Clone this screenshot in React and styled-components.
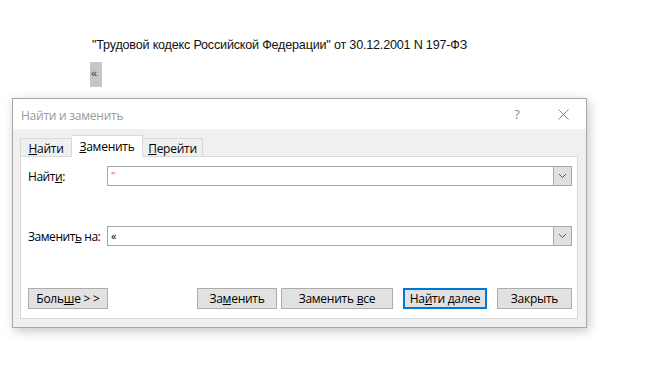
import React from "react";
import styled, { createGlobalStyle } from "styled-components";

const GlobalStyle = createGlobalStyle`
  html, body {
    margin: 0;
    padding: 0;
    background: #ffffff;
  }
  body {
    font-family: "Open Sans", "Noto Sans", sans-serif;
    font-size: 12px;
    letter-spacing: -0.25px;
    color: #000000;
  }
`;

const Page = styled.div`
  width: 647px;
  height: 381px;
  padding-top: 36px;
  box-sizing: border-box;
  overflow: hidden;
`;

const DocLine = styled.div`
  margin-left: 92px;
  height: 18px;
  line-height: 18px;
  font-family: "Liberation Sans", Arial, sans-serif;
  font-size: 12.6px;
  letter-spacing: -0.2px;
  color: #111;
`;

const Marker = styled.div`
  margin: 8px 0 0 90px;
  width: 12px;
  height: 25px;
  background: #c6c6c6;
  font-family: "Liberation Sans", Arial, sans-serif;
  font-size: 11px;
  line-height: 22px;
  padding-left: 1px;
  box-sizing: border-box;
  color: #333;
`;

const Dialog = styled.div`
  margin: 11px 0 0 12px;
  width: 575px;
  height: 230px;
  box-sizing: border-box;
  border: 1px solid #a8a8a8;
  background: #f0f0f0;
  box-shadow: 2px 3px 10px rgba(0, 0, 0, 0.22);
  display: flex;
  flex-direction: column;
`;

const TitleBar = styled.div`
  height: 30px;
  background: #ffffff;
  display: flex;
  align-items: center;
  padding-left: 8px;
  flex-shrink: 0;
`;

const Title = styled.div`
  flex: 1;
  color: #9a9a9a;
  font-size: 12px;
  margin-top: 2px;
`;

const TitleButton = styled.div`
  width: ${(p) => p.$w}px;
  display: flex;
  justify-content: center;
  align-items: center;
  color: #8a8a8a;
  font-size: 13px;
`;

const Body = styled.div`
  flex: 1;
  padding: 7px 8px 8px 7px;
  display: flex;
  flex-direction: column;
`;

const Tabs = styled.div`
  display: flex;
  align-items: flex-end;
  height: 21px;
  position: relative;
  z-index: 1;
  margin-bottom: -1px;
`;

const Tab = styled.div`
  width: ${(p) => p.$w}px;
  height: ${(p) => (p.$active ? 22 : 19)}px;
  box-sizing: border-box;
  border: 1px solid #d9d9d9;
  border-bottom: ${(p) => (p.$active ? "1px solid #ffffff" : "1px solid #d9d9d9")};
  border-left: ${(p) => (p.$noLeft ? "none" : "1px solid #d9d9d9")};
  background: ${(p) => (p.$active ? "#ffffff" : "#f0f0f0")};
  display: flex;
  align-items: center;
  justify-content: center;
  padding-top: ${(p) => (p.$active ? 0 : 2)}px;
  font-size: 12px;
  color: #000;
`;

const Panel = styled.div`
  flex: 1;
  background: #ffffff;
  border: 1px solid #d9d9d9;
  padding: 9px 5px 9px 7px;
  display: flex;
  flex-direction: column;
`;

const FieldRow = styled.div`
  display: flex;
  align-items: center;
  height: 20px;
  margin-bottom: ${(p) => p.$gap || 0}px;
`;

const Label = styled.div`
  width: 79px;
  font-size: 12px;
  letter-spacing: -0.45px;
  white-space: nowrap;
  color: #000;
`;

const Combo = styled.div`
  flex: 1;
  height: 20px;
  box-sizing: border-box;
  border: 1px solid #a8a8a8;
  display: flex;
  background: #fff;
`;

const ComboText = styled.div`
  flex: 1;
  padding-left: 3px;
  font-size: ${(p) => p.$size || 12}px;
  line-height: 18px;
  color: ${(p) => p.$color || "#000"};
`;

const ComboButton = styled.div`
  width: 17px;
  background: #e0e0e0;
  border-left: 1px solid #a8a8a8;
  display: flex;
  align-items: center;
  justify-content: center;
`;

const ButtonRow = styled.div`
  margin-top: auto;
  display: flex;
  align-items: center;
`;

const Button = styled.div`
  width: ${(p) => p.$w}px;
  height: 21px;
  box-sizing: border-box;
  margin-left: ${(p) => p.$ml || 0}px;
  border: ${(p) => (p.$default ? "2px solid #0078d7" : "1px solid #adadad")};
  background: #e1e1e1;
  display: flex;
  align-items: center;
  justify-content: center;
  font-size: 12px;
  color: #000;
  white-space: pre;
`;

const Spacer = styled.div`
  flex: 1;
`;

const U = styled.span`
  text-decoration: underline;
  text-underline-offset: 1px;
`;

const Chevron = () => (
  <svg width="9" height="6" viewBox="0 0 9 6">
    <path d="M1 1 L4.5 4.5 L8 1" fill="none" stroke="#555" strokeWidth="1" />
  </svg>
);

const Close = () => (
  <svg width="11" height="11" viewBox="0 0 11 11">
    <path d="M0.5 0.5 L10.5 10.5 M10.5 0.5 L0.5 10.5" stroke="#8a8a8a" strokeWidth="1" />
  </svg>
);

export default function App() {
  return (
    <Page>
      <GlobalStyle />
      <DocLine>"Трудовой кодекс Российской Федерации" от 30.12.2001 N 197-ФЗ</DocLine>
      <Marker>«</Marker>
      <Dialog>
        <TitleBar>
          <Title>Найти и заменить</Title>
          <TitleButton $w={20}>?</TitleButton>
          <TitleButton $w={26} />
          <TitleButton $w={20}>
            <Close />
          </TitleButton>
          <TitleButton $w={13} />
        </TitleBar>
        <Body>
          <Tabs>
            <Tab $w={52}>
              <span>
                <U>Н</U>айти
              </span>
            </Tab>
            <Tab $w={71} $active $noLeft>
              <span>
                <U>З</U>аменить
              </span>
            </Tab>
            <Tab $w={60} $noLeft>
              <span>
                <U>П</U>ерейти
              </span>
            </Tab>
          </Tabs>
          <Panel>
            <FieldRow $gap={40}>
              <Label>
                Найт<U>и</U>:
              </Label>
              <Combo>
                <ComboText $color="#c8702a" $size={11}>"</ComboText>
                <ComboButton>
                  <Chevron />
                </ComboButton>
              </Combo>
            </FieldRow>
            <FieldRow>
              <Label>
                Заменит<U>ь</U> на:
              </Label>
              <Combo>
                <ComboText $size={11}>«</ComboText>
                <ComboButton>
                  <Chevron />
                </ComboButton>
              </Combo>
            </FieldRow>
            <ButtonRow>
              <Button $w={80}>
                <span>
                  Боль<U>ш</U>е &gt; &gt;
                </span>
              </Button>
              <Spacer />
              <Button $w={80}>
                <span>
                  За<U>м</U>енить
                </span>
              </Button>
              <Button $w={112} $ml={4}>
                <span>
                  Заменить <U>в</U>се
                </span>
              </Button>
              <Button $w={84} $ml={10} $default>
                <span>
                  На<U>й</U>ти далее
                </span>
              </Button>
              <Button $w={75} $ml={10}>
                <span>Закрыть</span>
              </Button>
            </ButtonRow>
          </Panel>
        </Body>
      </Dialog>
    </Page>
  );
}
